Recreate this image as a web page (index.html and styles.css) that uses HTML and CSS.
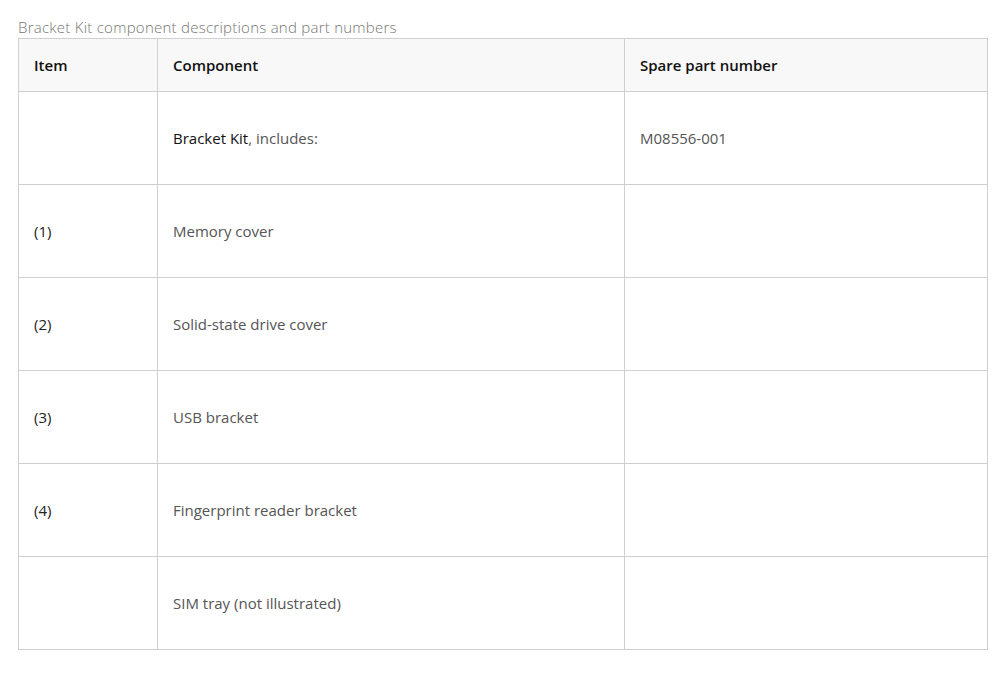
FILE: index.html
```html
<!DOCTYPE html>
<html lang="en">
<head>
  <meta charset="UTF-8">
  <title>Bracket Kit</title>
  <link rel="stylesheet" href="styles.css">
</head>
<body>
  <table class="parts">
    <caption>Bracket Kit component descriptions and part numbers</caption>
    <colgroup>
      <col class="col-item">
      <col class="col-component">
      <col class="col-part">
    </colgroup>
    <thead>
      <tr>
        <th>Item</th>
        <th>Component</th>
        <th>Spare part number</th>
      </tr>
    </thead>
    <tbody>
      <tr>
        <td></td>
        <td><span class="kit">Bracket Kit</span>, includes:</td>
        <td>M08556-001</td>
      </tr>
      <tr>
        <td class="item">(1)</td>
        <td>Memory cover</td>
        <td></td>
      </tr>
      <tr>
        <td class="item">(2)</td>
        <td>Solid-state drive cover</td>
        <td></td>
      </tr>
      <tr>
        <td class="item">(3)</td>
        <td>USB bracket</td>
        <td></td>
      </tr>
      <tr>
        <td class="item">(4)</td>
        <td>Fingerprint reader bracket</td>
        <td></td>
      </tr>
      <tr>
        <td></td>
        <td>SIM tray (not illustrated)</td>
        <td></td>
      </tr>
    </tbody>
  </table>
</body>
</html>
```

FILE: styles.css
```css
body {
  margin: 18px;
  font-family: "Open Sans", "Noto Sans", sans-serif;
  font-size: 15px;
  color: #444;
  background: #fff;
}

.parts {
  width: 970px;
  border-collapse: collapse;
  table-layout: fixed;
}

.parts caption {
  text-align: left;
  color: #767676;
  font-weight: 300;
  line-height: 18px;
  padding-bottom: 2px;
  letter-spacing: 0.25px;
}

.col-item {
  width: 139px;
}

.col-component {
  width: 467px;
}

.parts th,
.parts td {
  border: 1px solid #cfcfcf;
  text-align: left;
  vertical-align: middle;
  padding: 0 15px;
}

.parts th {
  height: 52px;
  background: #f8f8f8;
  color: #111;
  font-weight: 600;
}

.parts td {
  height: 92px;
  font-weight: 400;
  color: #555;
}

.parts td.item {
  color: #222;
}

.kit {
  color: #111;
}
```
